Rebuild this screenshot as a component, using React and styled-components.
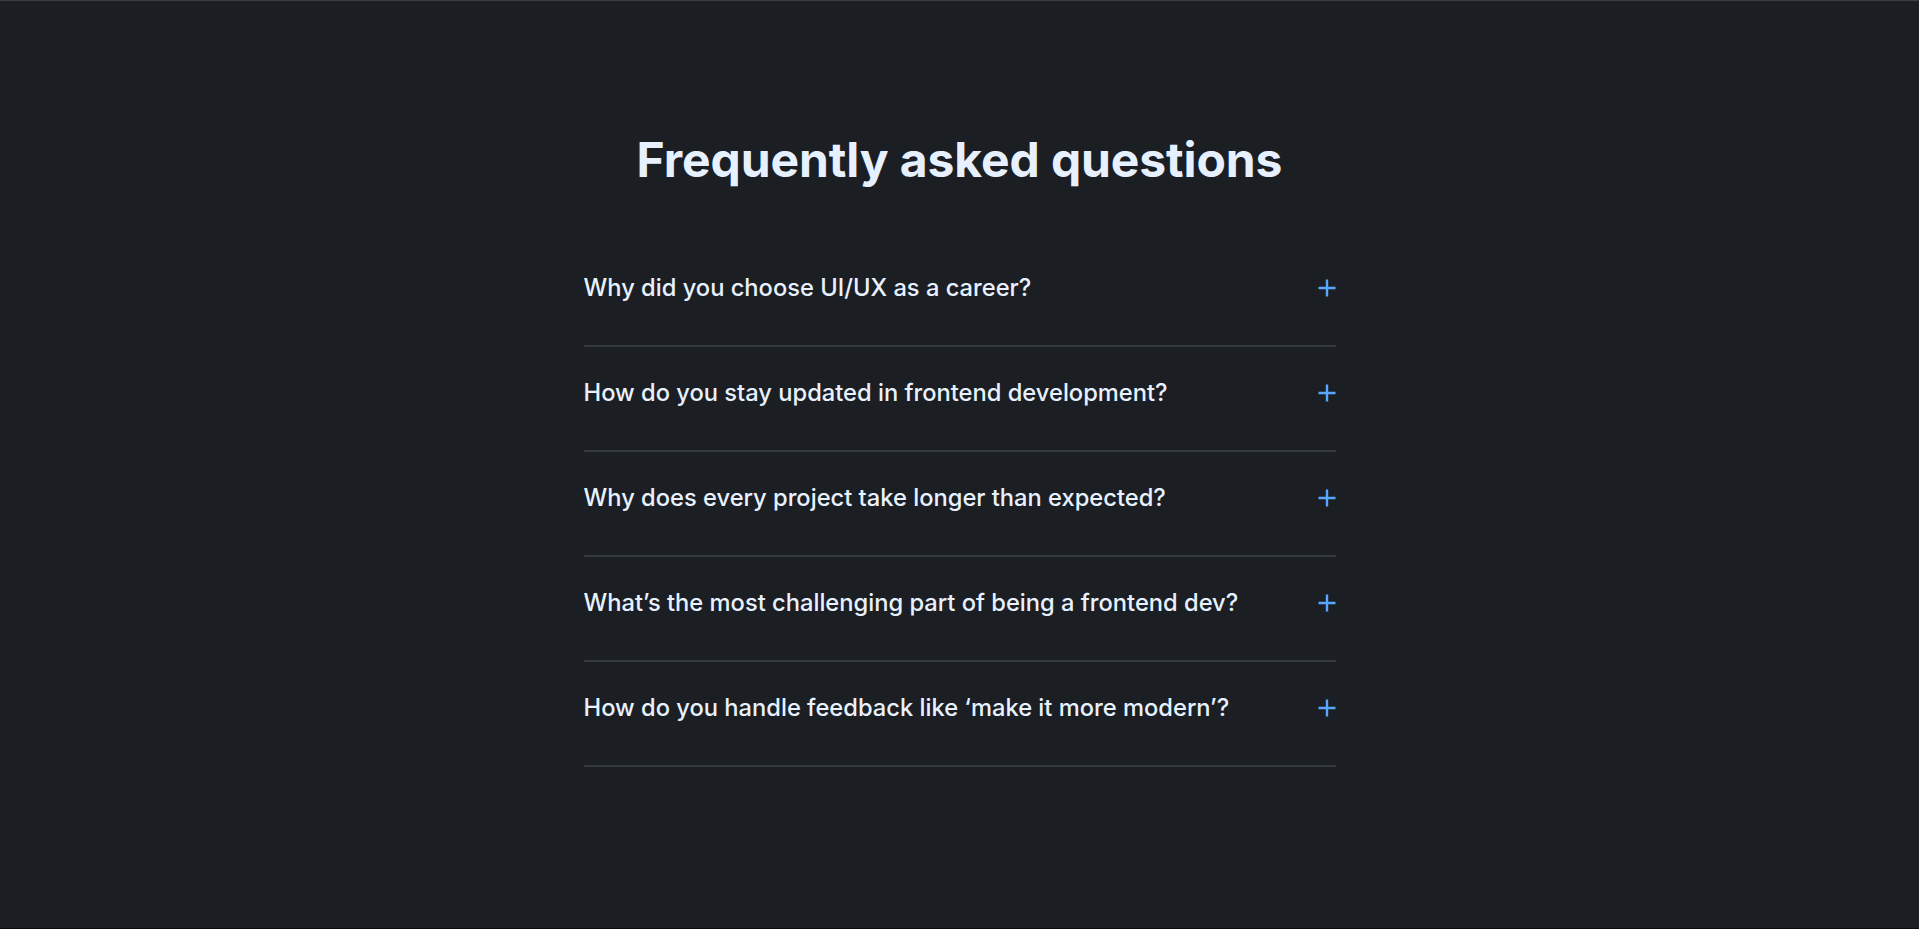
import React from "react";
import styled, { createGlobalStyle } from "styled-components";

const GlobalStyle = createGlobalStyle`
  * { box-sizing: border-box; }
  html, body { margin: 0; padding: 0; background: #1b1f23; }
  body { font-family: Inter, "Open Sans", sans-serif; }
`;

const Page = styled.main`
  min-height: 100vh;
  background: #1b1f23;
  border-top: 1px solid #3b3d3f;
  border-bottom: 1px solid #0b0c0d;
  padding-top: 129px;
`;

const Section = styled.section`
  max-width: 752px;
  margin: 0 auto;
  display: flex;
  flex-direction: column;
  align-items: stretch;
`;

const Title = styled.h1`
  margin: 0 0 52px;
  text-align: center;
  font-family: Inter, sans-serif;
  font-size: 48px;
  line-height: 60px;
  font-weight: 700;
  color: #e6f0ff;
  letter-spacing: -0.1px;
`;

const List = styled.div`
  display: flex;
  flex-direction: column;
`;

const Item = styled.div`
  border-bottom: 2px solid #33393f;
`;

const Question = styled.button`
  width: 100%;
  display: flex;
  align-items: center;
  justify-content: space-between;
  gap: 24px;
  padding: 31px 0 42px;
  background: none;
  border: none;
  cursor: pointer;
  text-align: left;
  font-family: Inter, sans-serif;
  font-size: 23.7px;
  line-height: 30px;
  font-weight: 550;
  color: #e8f1ff;
`;

const PlusIcon = () => (
  <svg width="18" height="18" viewBox="0 0 18 18" fill="none">
    <path d="M9 0.5v17M0.5 9h17" stroke="#58a6ff" strokeWidth="2.4" />
  </svg>
);

const questions = [
  "Why did you choose UI/UX as a career?",
  "How do you stay updated in frontend development?",
  "Why does every project take longer than expected?",
  "What\u2019s the most challenging part of being a frontend dev?",
  "How do you handle feedback like \u2018make it more modern\u2019?",
];

export default function App() {
  return (
    <>
      <GlobalStyle />
      <Page>
        <Section>
          <Title>Frequently asked questions</Title>
          <List>
            {questions.map((q) => (
              <Item key={q}>
                <Question>
                  <span>{q}</span>
                  <PlusIcon />
                </Question>
              </Item>
            ))}
          </List>
        </Section>
      </Page>
    </>
  );
}
